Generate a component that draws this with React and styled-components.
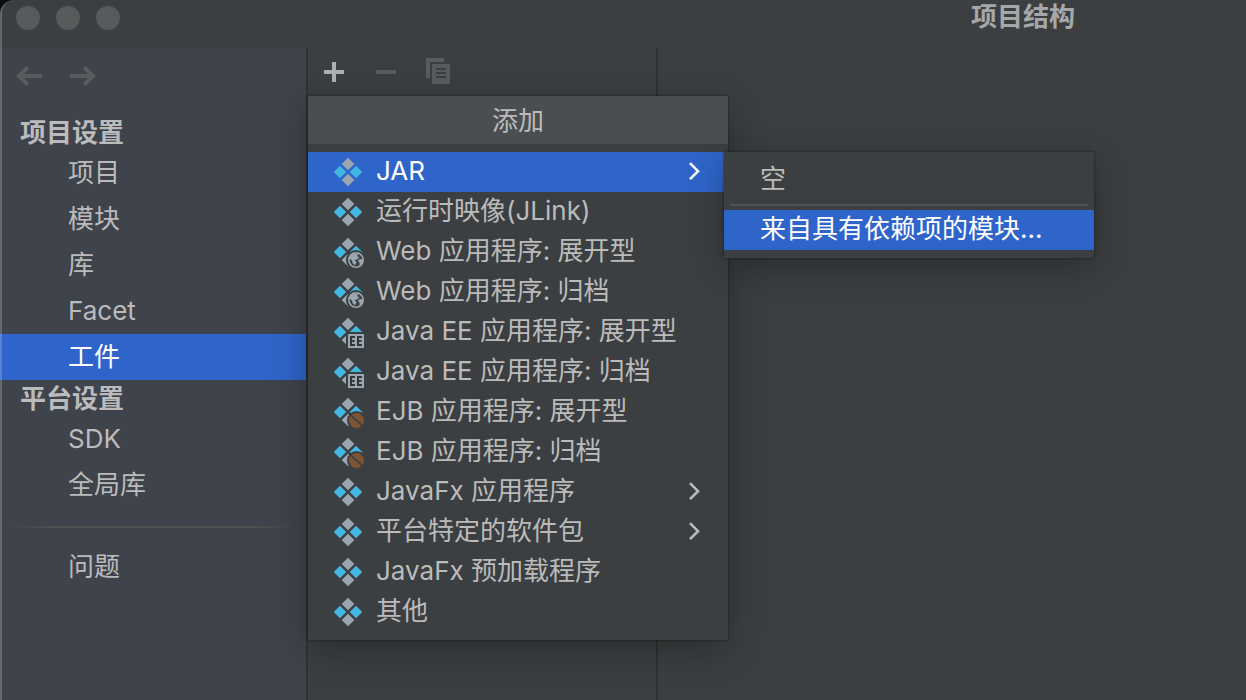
import React from 'react';
import styled, { createGlobalStyle, css } from 'styled-components';

const GlobalStyle = createGlobalStyle`
  *, *::before, *::after { box-sizing: border-box; }
  html, body, #root { height: 100%; }
  body {
    margin: 0;
    background: #0c0d0e;
    color: #bbbbbb;
    font: 400 26px/40px Inter, "Noto Sans CJK SC", sans-serif;
    overflow: hidden;
  }
  button { font: inherit; color: inherit; }
  h1, h2 { margin: 0; }
  ul { margin: 0; padding: 0; list-style: none; }
`;

const Window = styled.div`
  position: relative;
  display: flex;
  flex-direction: column;
  min-height: 100%;
  overflow: hidden;
  border-top-left-radius: 14px;
  background: #3c3f41;
  &::after {
    content: '';
    position: absolute;
    inset: 0;
    border-left: 2px solid rgba(255, 255, 255, 0.2);
    border-top-left-radius: 14px;
    pointer-events: none;
  }
`;

const TitleBar = styled.header`
  display: flex;
  align-items: flex-start;
  justify-content: space-between;
  height: 48px;
  padding: 0 171px 0 16px;
`;

const Lights = styled.div`
  display: flex;
  gap: 16px;
  padding-top: 6px;
`;

const Light = styled.button`
  width: 24px;
  height: 24px;
  padding: 0;
  border: 0;
  border-radius: 50%;
  background: #585b5c;
`;

const Title = styled.h1`
  font-size: 26px;
  line-height: 34px;
  font-weight: 700;
  color: #a6a7a9;
`;

const Body = styled.div`
  display: flex;
  flex: 1;
`;

const Sidebar = styled.nav`
  flex: 0 0 308px;
  border-right: 2px solid #323232;
  background: #3f434b;
`;

const History = styled.div`
  display: flex;
  gap: 22px;
  height: 66px;
  padding: 12px 14px;
`;

const IconButton = styled.button`
  display: grid;
  place-items: center;
  width: 32px;
  height: 32px;
  padding: 0;
  border: 0;
  background: none;
  color: ${(p) => (p.disabled ? '#5a5b5c' : '#afb1b3')};
`;

const GroupTitle = styled.h2`
  padding: 2px 0 0 20px;
  font-size: 26px;
  line-height: 34px;
  font-weight: 700;
`;

const NavItem = styled.button`
  display: block;
  width: 100%;
  height: 46px;
  padding: 0 0 0 68px;
  border: 0;
  text-align: left;
  background: ${(p) => (p.$selected ? '#2f65ca' : 'none')};
  color: ${(p) => (p.$selected ? '#ffffff' : 'inherit')};
`;

const NavRule = styled.hr`
  height: 2px;
  margin: 18px 12px 16px;
  border: 0;
  background: linear-gradient(to right, transparent, #515151 15%, #515151 85%, transparent);
`;

const ListPane = styled.section`
  position: relative;
  flex: 0 0 350px;
  border-right: 2px solid #323232;
`;

const Toolbar = styled.div`
  display: flex;
  gap: 20px;
  padding: 8px 10px;
`;

const Detail = styled.main`
  flex: 1;
`;

const popup = css`
  position: absolute;
  background: #3c3f41;
  box-shadow: 0 0 2px rgba(0, 0, 0, 0.6), 0 10px 36px rgba(0, 0, 0, 0.3);
`;

const Menu = styled.div`
  ${popup}
  top: 48px;
  left: 0;
  z-index: 1;
  width: 420px;
  padding-bottom: 8px;
`;

const MenuTitle = styled.h2`
  margin-bottom: 8px;
  padding-top: 2px;
  background: #4b4e51;
  font-size: 26px;
  line-height: 46px;
  font-weight: 400;
  text-align: center;
`;

const MenuEntry = styled.li`
  position: relative;
`;

const MenuItem = styled.button`
  display: flex;
  align-items: center;
  gap: 12px;
  width: 100%;
  height: 40px;
  padding: 0 24px;
  border: 0;
  text-align: left;
  white-space: nowrap;
  background: ${(p) => (p.$active ? '#2f65ca' : 'none')};
  color: ${(p) => (p.$active ? '#ffffff' : 'inherit')};
`;

const MenuLabel = styled.span`
  flex: 1;
  align-self: flex-start;
  line-height: 38px;
`;

const Submenu = styled.ul`
  ${popup}
  top: 0;
  left: 416px;
  width: 370px;
  && { padding: 8px 0; }
  ${MenuItem} { padding-left: 36px; }
`;

const MenuRule = styled.li`
  height: 2px;
  margin: 4px 6px;
  background: #515151;
`;

const Diamond = ({ x, y, fill }) => (
  <path d={`M${x} ${y - 6.3}L${x + 6.3} ${y}L${x} ${y + 6.3}L${x - 6.3} ${y}Z`} fill={fill} />
);

const badges = {
  web: (
    <>
      <circle cx="24" cy="24" r="10" fill="#3c3f41" />
      <circle cx="24" cy="24" r="7.2" fill="none" stroke="#9aa7b0" strokeWidth="1.6" />
      <path d="M17 22.500L19 19L22.500 17.500L26.500 18L25 20L27.500 21.500L25 23.500L22.500 24L24.500 26L23 29.500L20.500 27L20 24.500Z" fill="#9aa7b0" />
      <path d="M27 23.500L31 23L30.500 27L27.500 29.500L27.500 26.500L26 25Z" fill="#9aa7b0" />
    </>
  ),
  ee: (
    <>
      <path d="M14 16H32V32H14Z" fill="#3c3f41" />
      <path d="M16 18H32V32H16Z" fill="#9aa7b0" />
      <path d="M23 21H19V29H23M19 25H22.500M30 21H26V29H30M26 25H29.500" fill="none" stroke="#33383c" strokeWidth="2" />
    </>
  ),
  ejb: (
    <>
      <circle cx="24.500" cy="24.500" r="9.500" fill="#3c3f41" />
      <circle cx="24.500" cy="24.500" r="7.500" fill="#7f5433" />
      <path d="M18.500 18.500C21 22 22 23 24.500 24.500S28.500 27.500 30.500 30.500" fill="none" stroke="#3c3f41" strokeWidth="1.500" />
    </>
  ),
};

const ArtifactIcon = ({ badge }) => (
  <svg width="32" height="32" viewBox="0 0 32 32" aria-hidden="true">
    <Diamond x={16} y={8} fill="#9aa7b0" />
    <Diamond x={8} y={16} fill="#40b6e0" />
    <Diamond x={24} y={16} fill="#40b6e0" />
    <Diamond x={16} y={24} fill="#9aa7b0" />
    {badges[badge]}
  </svg>
);

const Chevron = () => (
  <svg width="20" height="20" viewBox="0 0 20 20" fill="none" stroke="currentColor" strokeWidth="2.600" aria-hidden="true">
    <path d="M6 1.200L14 9.200L6 17.200" />
  </svg>
);

const Arrow = ({ flip }) => (
  <svg width="32" height="32" viewBox="0 0 32 32" fill="none" stroke="currentColor" strokeWidth="4" aria-hidden="true">
    <path d={flip ? 'M2 16H26M16.500 7.500L25 16L16.500 24.500' : 'M28 16H4M13.500 7.500L5 16L13.500 24.500'} />
  </svg>
);

const settingsGroups = [
  { title: '项目设置', items: ['项目', '模块', '库', 'Facet', '工件'] },
  { title: '平台设置', items: ['SDK', '全局库'] },
];

const artifactTypes = [
  { label: 'JAR', submenu: ['空', '来自具有依赖项的模块...'] },
  { label: '运行时映像(JLink)' },
  { label: 'Web 应用程序: 展开型', badge: 'web' },
  { label: 'Web 应用程序: 归档', badge: 'web' },
  { label: 'Java EE 应用程序: 展开型', badge: 'ee' },
  { label: 'Java EE 应用程序: 归档', badge: 'ee' },
  { label: 'EJB 应用程序: 展开型', badge: 'ejb' },
  { label: 'EJB 应用程序: 归档', badge: 'ejb' },
  { label: 'JavaFx 应用程序', more: true },
  { label: '平台特定的软件包', more: true },
  { label: 'JavaFx 预加载程序' },
  { label: '其他' },
];

export default function App() {
  return (
    <>
      <GlobalStyle />
      <Window>
        <TitleBar>
          <Lights>
            <Light aria-label="关闭" />
            <Light aria-label="最小化" />
            <Light aria-label="缩放" />
          </Lights>
          <Title>项目结构</Title>
        </TitleBar>
        <Body>
          <Sidebar>
            <History>
              <IconButton disabled aria-label="后退"><Arrow /></IconButton>
              <IconButton disabled aria-label="前进"><Arrow flip /></IconButton>
            </History>
            {settingsGroups.map((group) => (
              <React.Fragment key={group.title}>
                <GroupTitle>{group.title}</GroupTitle>
                {group.items.map((item) => (
                  <NavItem key={item} $selected={item === '工件'}>{item}</NavItem>
                ))}
              </React.Fragment>
            ))}
            <NavRule />
            <NavItem>问题</NavItem>
          </Sidebar>
          <ListPane>
            <Toolbar>
              <IconButton aria-label="添加">
                <svg width="32" height="32" viewBox="0 0 32 32" fill="currentColor">
                  <path d="M14 6H18V14H26V18H18V26H14V18H6V14H14Z" />
                </svg>
              </IconButton>
              <IconButton disabled aria-label="移除">
                <svg width="32" height="32" viewBox="0 0 32 32" fill="currentColor">
                  <path d="M6 14H26V18H6Z" />
                </svg>
              </IconButton>
              <IconButton disabled aria-label="复制">
                <svg width="32" height="32" viewBox="0 0 32 32" fill="currentColor" fillRule="evenodd">
                  <path d="M4 2H22V6H8V22H4Z" />
                  <path d="M10 8H28V28H10ZM14 12V14H24V12ZM14 16V18H24V16ZM14 20V22H24V20Z" />
                </svg>
              </IconButton>
            </Toolbar>
            <Menu>
              <MenuTitle>添加</MenuTitle>
              <ul>
                {artifactTypes.map(({ label, badge, submenu, more }) => (
                  <MenuEntry key={label}>
                    <MenuItem $active={Boolean(submenu)}>
                      <ArtifactIcon badge={badge} />
                      <MenuLabel>{label}</MenuLabel>
                      {(submenu || more) && <Chevron />}
                    </MenuItem>
                    {submenu && (
                      <Submenu>
                        <li><MenuItem><MenuLabel>{submenu[0]}</MenuLabel></MenuItem></li>
                        <MenuRule role="separator" />
                        <li><MenuItem $active><MenuLabel>{submenu[1]}</MenuLabel></MenuItem></li>
                      </Submenu>
                    )}
                  </MenuEntry>
                ))}
              </ul>
            </Menu>
          </ListPane>
          <Detail />
        </Body>
      </Window>
    </>
  );
}
